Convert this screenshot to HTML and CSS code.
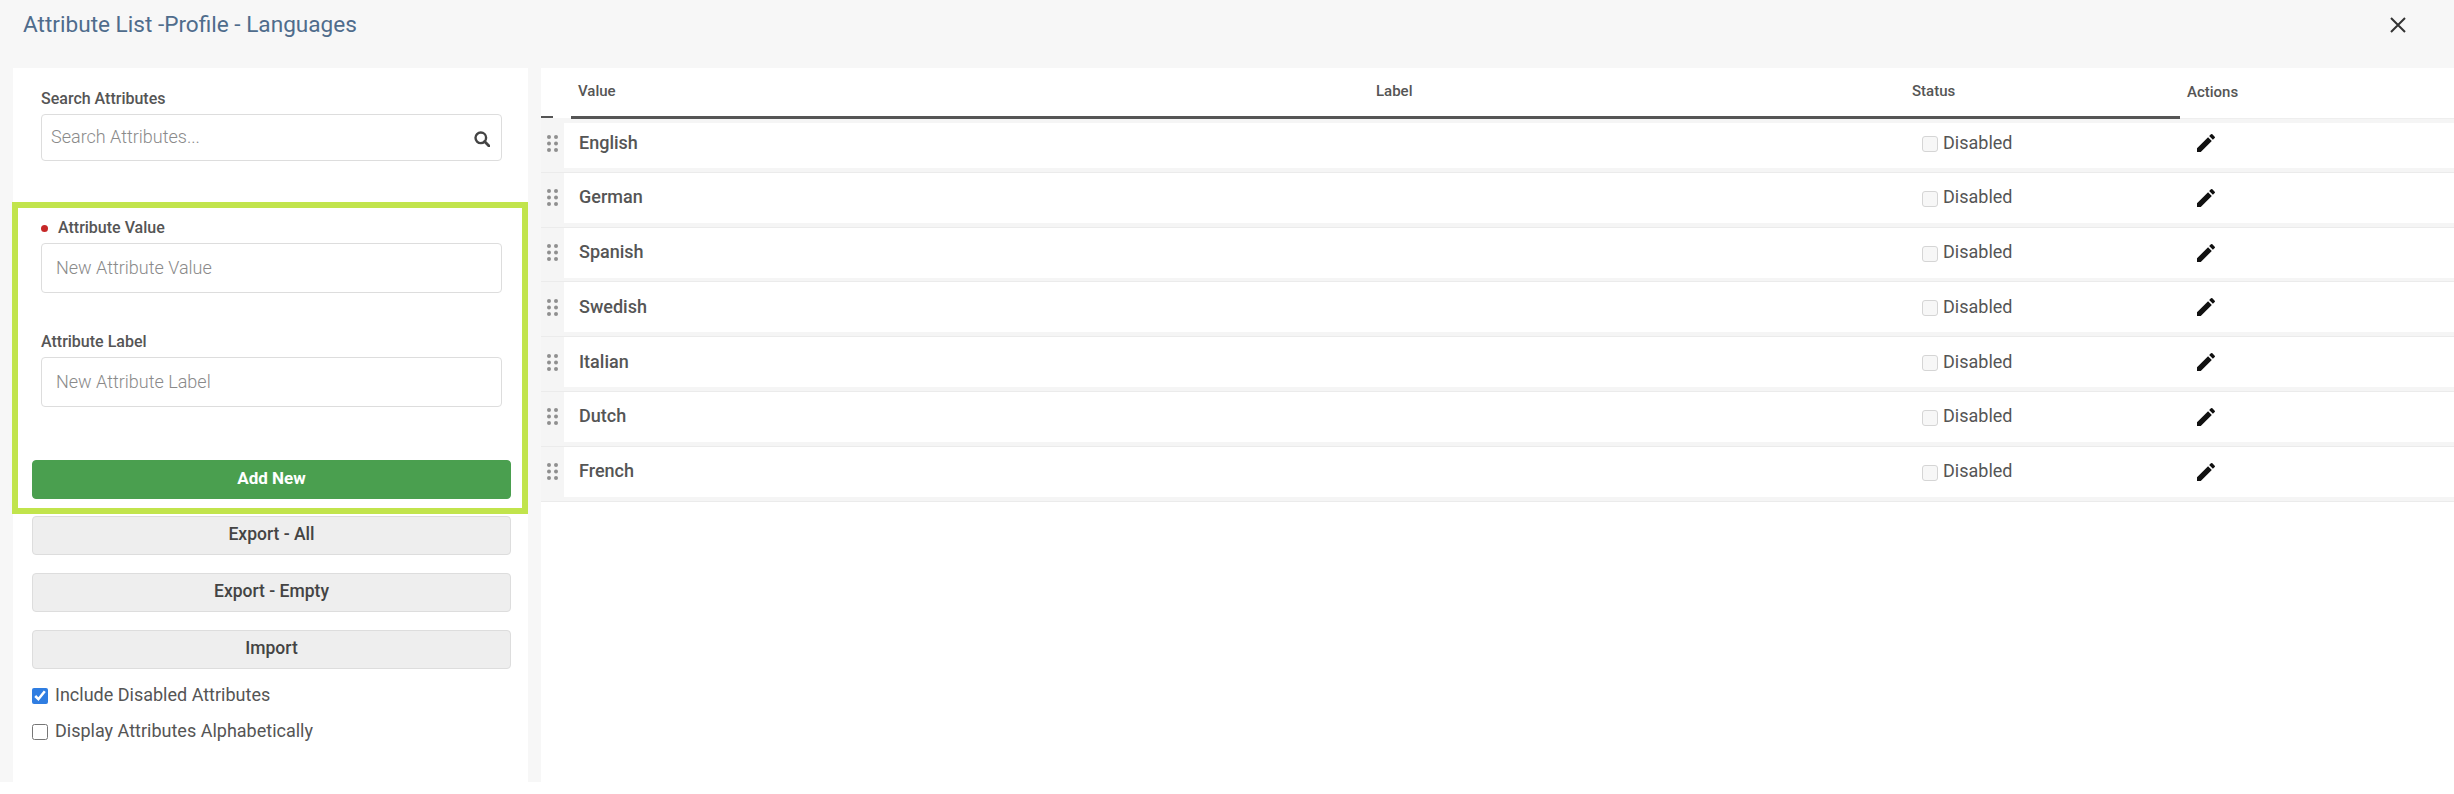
FILE: index.html
```html
<!DOCTYPE html>
<html lang="en">
<head>
<meta charset="utf-8">
<title>Attribute List</title>
<link rel="stylesheet" href="styles.css">
</head>
<body>
<header class="topbar">
  <h1 class="title">Attribute List -Profile - Languages</h1>
  <button class="close" aria-label="Close">
    <svg width="16" height="16" viewBox="0 0 16 16"><path d="M1 1L15 15M15 1L1 15" stroke="#333" stroke-width="2" fill="none"/></svg>
  </button>
</header>
<main class="main">
  <aside class="sidebar">
    <div class="search-group">
      <label class="field-label">Search Attributes</label>
      <div class="search-box">
        <input class="input search-input" placeholder="Search Attributes...">
        <svg class="search-icon" width="16" height="16" viewBox="0 0 16 16"><circle cx="6.8" cy="6.8" r="5.3" fill="none" stroke="#444" stroke-width="2.4"/><path d="M10.6 10.6L15 15" stroke="#444" stroke-width="2.8" stroke-linecap="round"/></svg>
      </div>
    </div>
    <section class="highlight">
      <div class="field">
        <label class="field-label required">Attribute Value</label>
        <input class="input tall" placeholder="New Attribute Value">
      </div>
      <div class="field field-second">
        <label class="field-label">Attribute Label</label>
        <input class="input tall" placeholder="New Attribute Label">
      </div>
      <button class="btn btn-green">Add New</button>
    </section>
    <div class="actions">
      <button class="btn btn-grey">Export - All</button>
      <button class="btn btn-grey">Export - Empty</button>
      <button class="btn btn-grey">Import</button>
    </div>
    <div class="options">
      <label class="option"><input type="checkbox" class="opt-check" checked>Include Disabled Attributes</label>
      <label class="option"><input type="checkbox" class="opt-check">Display Attributes Alphabetically</label>
    </div>
  </aside>
  <section class="panel">
    <div class="thead">
      <div class="th th-drag"></div>
      <div class="th th-value">Value</div>
      <div class="th th-label">Label</div>
      <div class="th th-status">Status</div>
      <div class="th th-actions">Actions</div>
    </div>
    <div class="tbody" id="rows">
      <div class="row"><div class="drag"><svg width="11" height="17" viewBox="0 0 11 17"><g fill="#8f8f8f"><circle cx="2" cy="2" r="2"/><circle cx="9" cy="2" r="2"/><circle cx="2" cy="8.5" r="2"/><circle cx="9" cy="8.5" r="2"/><circle cx="2" cy="15" r="2"/><circle cx="9" cy="15" r="2"/></g></svg></div><div class="val">English</div><div class="lab"></div><div class="status"><span class="box"></span>Disabled</div><div class="act"><svg width="24" height="24" viewBox="0 0 24 24"><path fill="#111" d="M3 17.25V21h3.75L17.81 9.94l-3.75-3.75L3 17.25zM20.71 7.04a1 1 0 0 0 0-1.41l-2.34-2.34a1 1 0 0 0-1.41 0l-1.83 1.83 3.75 3.75 1.83-1.83z"/></svg></div></div>
      <div class="row"><div class="drag"><svg width="11" height="17" viewBox="0 0 11 17"><g fill="#8f8f8f"><circle cx="2" cy="2" r="2"/><circle cx="9" cy="2" r="2"/><circle cx="2" cy="8.5" r="2"/><circle cx="9" cy="8.5" r="2"/><circle cx="2" cy="15" r="2"/><circle cx="9" cy="15" r="2"/></g></svg></div><div class="val">German</div><div class="lab"></div><div class="status"><span class="box"></span>Disabled</div><div class="act"><svg width="24" height="24" viewBox="0 0 24 24"><path fill="#111" d="M3 17.25V21h3.75L17.81 9.94l-3.75-3.75L3 17.25zM20.71 7.04a1 1 0 0 0 0-1.41l-2.34-2.34a1 1 0 0 0-1.41 0l-1.83 1.83 3.75 3.75 1.83-1.83z"/></svg></div></div>
      <div class="row"><div class="drag"><svg width="11" height="17" viewBox="0 0 11 17"><g fill="#8f8f8f"><circle cx="2" cy="2" r="2"/><circle cx="9" cy="2" r="2"/><circle cx="2" cy="8.5" r="2"/><circle cx="9" cy="8.5" r="2"/><circle cx="2" cy="15" r="2"/><circle cx="9" cy="15" r="2"/></g></svg></div><div class="val">Spanish</div><div class="lab"></div><div class="status"><span class="box"></span>Disabled</div><div class="act"><svg width="24" height="24" viewBox="0 0 24 24"><path fill="#111" d="M3 17.25V21h3.75L17.81 9.94l-3.75-3.75L3 17.25zM20.71 7.04a1 1 0 0 0 0-1.41l-2.34-2.34a1 1 0 0 0-1.41 0l-1.83 1.83 3.75 3.75 1.83-1.83z"/></svg></div></div>
      <div class="row"><div class="drag"><svg width="11" height="17" viewBox="0 0 11 17"><g fill="#8f8f8f"><circle cx="2" cy="2" r="2"/><circle cx="9" cy="2" r="2"/><circle cx="2" cy="8.5" r="2"/><circle cx="9" cy="8.5" r="2"/><circle cx="2" cy="15" r="2"/><circle cx="9" cy="15" r="2"/></g></svg></div><div class="val">Swedish</div><div class="lab"></div><div class="status"><span class="box"></span>Disabled</div><div class="act"><svg width="24" height="24" viewBox="0 0 24 24"><path fill="#111" d="M3 17.25V21h3.75L17.81 9.94l-3.75-3.75L3 17.25zM20.71 7.04a1 1 0 0 0 0-1.41l-2.34-2.34a1 1 0 0 0-1.41 0l-1.83 1.83 3.75 3.75 1.83-1.83z"/></svg></div></div>
      <div class="row"><div class="drag"><svg width="11" height="17" viewBox="0 0 11 17"><g fill="#8f8f8f"><circle cx="2" cy="2" r="2"/><circle cx="9" cy="2" r="2"/><circle cx="2" cy="8.5" r="2"/><circle cx="9" cy="8.5" r="2"/><circle cx="2" cy="15" r="2"/><circle cx="9" cy="15" r="2"/></g></svg></div><div class="val">Italian</div><div class="lab"></div><div class="status"><span class="box"></span>Disabled</div><div class="act"><svg width="24" height="24" viewBox="0 0 24 24"><path fill="#111" d="M3 17.25V21h3.75L17.81 9.94l-3.75-3.75L3 17.25zM20.71 7.04a1 1 0 0 0 0-1.41l-2.34-2.34a1 1 0 0 0-1.41 0l-1.83 1.83 3.75 3.75 1.83-1.83z"/></svg></div></div>
      <div class="row"><div class="drag"><svg width="11" height="17" viewBox="0 0 11 17"><g fill="#8f8f8f"><circle cx="2" cy="2" r="2"/><circle cx="9" cy="2" r="2"/><circle cx="2" cy="8.5" r="2"/><circle cx="9" cy="8.5" r="2"/><circle cx="2" cy="15" r="2"/><circle cx="9" cy="15" r="2"/></g></svg></div><div class="val">Dutch</div><div class="lab"></div><div class="status"><span class="box"></span>Disabled</div><div class="act"><svg width="24" height="24" viewBox="0 0 24 24"><path fill="#111" d="M3 17.25V21h3.75L17.81 9.94l-3.75-3.75L3 17.25zM20.71 7.04a1 1 0 0 0 0-1.41l-2.34-2.34a1 1 0 0 0-1.41 0l-1.83 1.83 3.75 3.75 1.83-1.83z"/></svg></div></div>
      <div class="row"><div class="drag"><svg width="11" height="17" viewBox="0 0 11 17"><g fill="#8f8f8f"><circle cx="2" cy="2" r="2"/><circle cx="9" cy="2" r="2"/><circle cx="2" cy="8.5" r="2"/><circle cx="9" cy="8.5" r="2"/><circle cx="2" cy="15" r="2"/><circle cx="9" cy="15" r="2"/></g></svg></div><div class="val">French</div><div class="lab"></div><div class="status"><span class="box"></span>Disabled</div><div class="act"><svg width="24" height="24" viewBox="0 0 24 24"><path fill="#111" d="M3 17.25V21h3.75L17.81 9.94l-3.75-3.75L3 17.25zM20.71 7.04a1 1 0 0 0 0-1.41l-2.34-2.34a1 1 0 0 0-1.41 0l-1.83 1.83 3.75 3.75 1.83-1.83z"/></svg></div></div>
    </div>
  </section>
</main>
</body>
</html>
```
FILE: styles.css
```css
* { box-sizing: border-box; }
html, body { margin: 0; padding: 0; background: #fff; }
body { width: 2454px; height: 794px; overflow: hidden; font-family: Roboto, "Liberation Sans", sans-serif; color: #555; }

.topbar { height: 68px; background: #f7f7f7; display: flex; justify-content: space-between; align-items: flex-start; padding: 12px 48px 0 23px; }
.title { margin: 0; font-size: 22.6px; line-height: 26px; font-weight: 400; color: #4f6c8c; }
.close { border: 0; background: none; padding: 5px 0 0; width: 16px; height: 26px; display: flex; }

.main { height: 714px; background: #f7f7f7; display: flex; padding-left: 13px; gap: 13px; }
.sidebar { width: 515px; background: #fff; padding-top: 21px; }
.panel { flex: 1; background: #fff; }

.search-group { margin-left: 28px; width: 461px; }
.field-label { display: block; font-size: 16px; line-height: 20px; font-weight: 500; color: #555; margin-bottom: 5px; }
.search-box { position: relative; }
.input { display: block; width: 100%; border: 1px solid #ddd; border-radius: 4px; background: #fff; font-family: inherit; font-size: 18px; font-weight: 300; color: #555; outline: 0; }
.input::placeholder { color: #8a8a8a; opacity: 1; }
.search-input { height: 47px; padding: 0 40px 2px 9px; }
.search-icon { position: absolute; right: 12px; top: 17px; }

.highlight { margin: 41px 0 0 -1px; width: 516px; border: 6px solid #c1e44c; padding: 10px 11px 9px 14px; background: #fff; }
.field { margin-left: 9px; width: 461px; }
.field-second { margin-top: 39px; }
.required { padding-left: 17px; position: relative; }
.required::before { content: ""; position: absolute; left: 0; top: 7px; width: 7px; height: 7px; border-radius: 50%; background: #c62828; }
.tall { height: 50px; padding: 0 14px 2px; }

.btn { display: block; width: 479px; height: 39px; border-radius: 4px; font-family: inherit; font-size: 17px; line-height: 1; font-weight: 500; padding: 0 0 2px; }
.btn-green { margin-top: 53px; background: #4a9f4f; border: 1px solid #4a9f4f; color: #fff; font-weight: 700; }
.btn-grey { background: #eee; border: 1px solid #ddd; color: #444; font-size: 17.5px; }
.actions { margin: 2px 0 0 19px; display: flex; flex-direction: column; gap: 18px; }

.options { margin: 17px 0 0 19px; display: flex; flex-direction: column; gap: 19px; }
.option { display: flex; align-items: center; height: 17px; font-size: 18px; color: #555; }
.opt-check { width: 16px; height: 16px; margin: 2px 7px 0 0; accent-color: #2f7de1; }

.thead, .row { display: grid; grid-template-columns: 30px 798px 536px 275px 1fr; }
.thead { height: 50px; }
.th { font-size: 15px; font-weight: 500; line-height: 20px; color: #555; padding-top: 13px; border-bottom: 3px solid #555; }
.th-value { padding-left: 7px; }
.th-label { padding-left: 7px; }
.th-status { padding-left: 7px; }
.th-drag { border-bottom: 0; padding-top: 0; }
.th-drag::after { content: ""; display: block; width: 12px; height: 3px; background: #555; margin-top: 48px; }
.th-actions { border-bottom: 1px solid #eee; padding-left: 7px; padding-top: 14px; }

.row { height: 54.8px; padding-bottom: 4.8px; background: linear-gradient(#fff, #fff) content-box, #f5f5f5; box-shadow: inset 0 -1px 0 #ebebeb; align-items: center; font-size: 18px; color: #555; }
.row:first-child { box-shadow: inset 0 -1px 0 #ebebeb, inset 0 5px 0 #f5f5f5; }
.drag { width: 23px; height: 50px; background: #f5f5f5; display: flex; align-items: center; justify-content: center; }
.val { padding: 0 0 2px 8px; font-weight: 500; }
.status { padding: 0 0 2px 17px; display: flex; align-items: center; font-weight: 400; }
.box { width: 16px; height: 16px; border: 1px solid #d5d5d5; border-radius: 3px; background: #f7f7f7; margin: 4px 5px 0 0; }
.act { padding-left: 14px; display: flex; }
```
